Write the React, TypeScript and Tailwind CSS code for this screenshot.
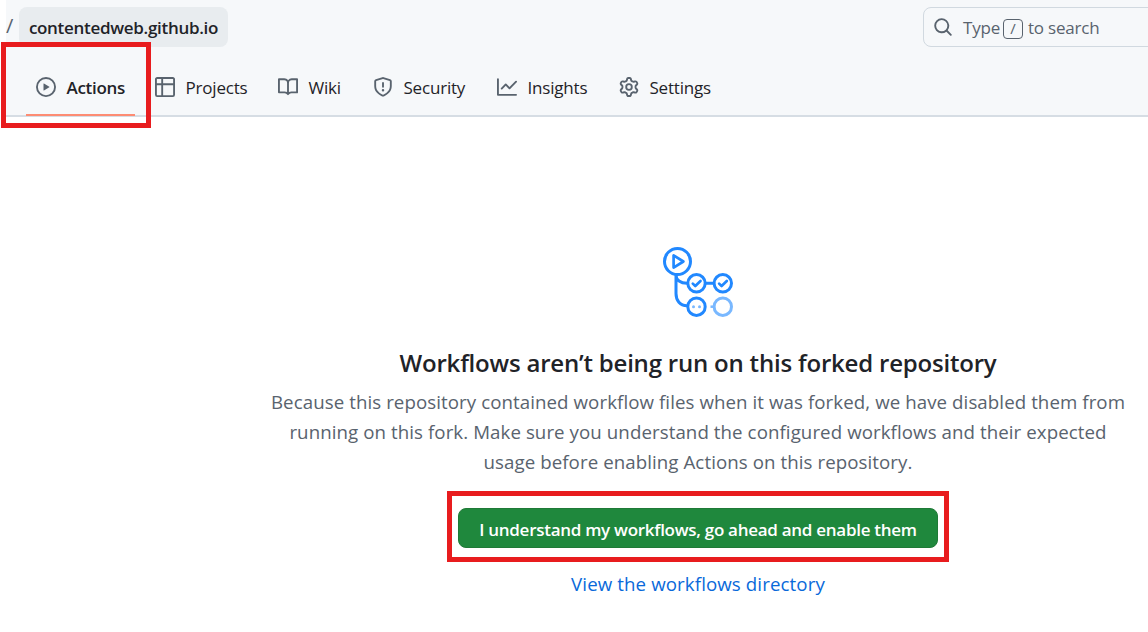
import type { ReactNode } from "react";

const paths = {
  play: "M8 0a8 8 0 1 1 0 16A8 8 0 0 1 8 0ZM1.5 8a6.5 6.5 0 1 0 13 0 6.5 6.5 0 0 0-13 0Zm4.879-2.773 4.264 2.559a.25.25 0 0 1 0 .428l-4.264 2.559A.25.25 0 0 1 6 10.559V5.442a.25.25 0 0 1 .379-.215Z",
  table: "M0 1.75C0 .784.784 0 1.75 0h12.5C15.216 0 16 .784 16 1.75v12.5A1.75 1.75 0 0 1 14.25 16H1.75A1.75 1.75 0 0 1 0 14.25ZM6.5 6.5v8h7.75a.25.25 0 0 0 .25-.25V6.5Zm8-1.5V1.75a.25.25 0 0 0-.25-.25H6.5V5Zm-13 1.5v7.75c0 .138.112.25.25.25H5v-8ZM5 5V1.5H1.75a.25.25 0 0 0-.25.25V5Z",
  book: "M0 1.75A.75.75 0 0 1 .75 1h4.253c1.227 0 2.317.59 3 1.501A3.743 3.743 0 0 1 11.006 1h4.245a.75.75 0 0 1 .75.75v10.5a.75.75 0 0 1-.75.75h-4.507a2.25 2.25 0 0 0-1.591.659l-.622.621a.75.75 0 0 1-1.06 0l-.622-.621A2.25 2.25 0 0 0 5.258 13H.75a.75.75 0 0 1-.75-.75Zm7.251 10.324.004-5.073-.002-2.253A2.25 2.25 0 0 0 5.003 2.5H1.5v9h3.757a3.75 3.75 0 0 1 1.994.574ZM8.755 4.75l-.004 7.322a3.752 3.752 0 0 1 1.992-.572H14.5v-9h-3.495a2.25 2.25 0 0 0-2.25 2.25Z",
  shield: "M7.467.133a1.748 1.748 0 0 1 1.066 0l5.25 1.68A1.75 1.75 0 0 1 15 3.48V7c0 1.566-.32 3.182-1.303 4.682-.983 1.498-2.585 2.813-5.032 3.855a1.697 1.697 0 0 1-1.33 0c-2.447-1.042-4.049-2.357-5.032-3.855C1.32 10.182 1 8.566 1 7V3.48a1.75 1.75 0 0 1 1.217-1.667Zm.61 1.429a.25.25 0 0 0-.153 0l-5.25 1.68a.25.25 0 0 0-.174.238V7c0 1.358.275 2.666 1.057 3.86.784 1.194 2.121 2.34 4.366 3.297a.196.196 0 0 0 .154 0c2.245-.956 3.582-2.104 4.366-3.298C13.225 9.666 13.5 8.36 13.5 7V3.48a.251.251 0 0 0-.174-.237l-5.25-1.68ZM8.75 4.75v3a.75.75 0 0 1-1.5 0v-3a.75.75 0 0 1 1.5 0ZM9 10.5a1 1 0 1 1-2 0 1 1 0 0 1 2 0Z",
  graph: "M1.5 1.75V13.5h13.75a.75.75 0 0 1 0 1.5H.75a.75.75 0 0 1-.75-.75V1.75a.75.75 0 0 1 1.5 0Zm14.28 2.53-5.25 5.25a.75.75 0 0 1-1.06 0L7 7.06 4.28 9.78a.751.751 0 0 1-1.042-.018.751.751 0 0 1-.018-1.042l3.25-3.25a.75.75 0 0 1 1.06 0L10 7.94l4.72-4.72a.751.751 0 0 1 1.042.018.751.751 0 0 1 .018 1.042Z",
  gear: "M8 0a8.2 8.2 0 0 1 .701.031C9.444.095 9.99.645 10.16 1.29l.288 1.107c.018.066.079.158.212.224.231.114.454.243.668.386.123.082.233.09.299.071l1.103-.303c.644-.176 1.392.021 1.82.63.27.385.506.792.704 1.218.315.675.111 1.422-.364 1.891l-.814.806c-.049.048-.098.147-.088.294.016.257.016.515 0 .772-.01.147.038.246.088.294l.814.806c.475.469.679 1.216.364 1.891a7.977 7.977 0 0 1-.704 1.217c-.428.61-1.176.807-1.82.63l-1.102-.302c-.067-.019-.177-.011-.3.071a5.909 5.909 0 0 1-.668.386c-.133.066-.194.158-.211.224l-.29 1.106c-.168.646-.715 1.196-1.458 1.26a8.006 8.006 0 0 1-1.402 0c-.743-.064-1.289-.614-1.458-1.26l-.289-1.106c-.018-.066-.079-.158-.212-.224a5.738 5.738 0 0 1-.668-.386c-.123-.082-.233-.09-.299-.071l-1.103.303c-.644.176-1.392-.021-1.82-.63a8.12 8.12 0 0 1-.704-1.218c-.315-.675-.111-1.422.363-1.891l.815-.806c.05-.048.098-.147.088-.294a6.214 6.214 0 0 1 0-.772c.01-.147-.038-.246-.088-.294l-.815-.806C.635 6.045.431 5.298.746 4.623a7.92 7.92 0 0 1 .704-1.217c.428-.61 1.176-.807 1.82-.63l1.102.302c.067.019.177.011.3-.071.214-.143.437-.272.668-.386.133-.066.194-.158.211-.224l.29-1.106C6.009.645 6.556.095 7.299.03 7.53.01 7.764 0 8 0Zm-.571 1.525c-.036.003-.108.036-.137.146l-.289 1.105c-.147.561-.549.967-.998 1.189-.173.086-.34.183-.5.29-.417.278-.97.423-1.529.27l-1.103-.303c-.109-.03-.175.016-.195.045-.22.312-.412.644-.573.99-.014.031-.021.11.059.19l.815.806c.411.406.562.957.53 1.456a4.709 4.709 0 0 0 0 .582c.032.499-.119 1.05-.53 1.456l-.815.806c-.081.08-.073.159-.059.19.162.346.353.677.573.989.02.03.085.076.195.046l1.102-.303c.56-.153 1.113-.008 1.53.27.161.107.328.204.501.29.447.222.85.629.997 1.189l.289 1.105c.029.109.101.143.137.146a6.6 6.6 0 0 0 1.142 0c.036-.003.108-.036.137-.146l.289-1.105c.147-.561.549-.967.998-1.189.173-.086.34-.183.5-.29.417-.278.97-.423 1.529-.27l1.103.303c.109.029.175-.016.195-.045.22-.313.411-.644.573-.99.014-.031.021-.11-.059-.19l-.815-.806c-.411-.406-.562-.957-.53-1.456a4.709 4.709 0 0 0 0-.582c-.032-.499.119-1.05.53-1.456l.815-.806c.081-.08.073-.159.059-.19a6.464 6.464 0 0 0-.573-.989c-.02-.03-.085-.076-.195-.046l-1.102.303c-.56.153-1.113.008-1.53-.27a4.44 4.44 0 0 0-.501-.29c-.447-.222-.85-.629-.997-1.189l-.289-1.105c-.029-.11-.101-.143-.137-.146a6.6 6.6 0 0 0-1.142 0ZM11 8a3 3 0 1 1-6 0 3 3 0 0 1 6 0ZM9.5 8a1.5 1.5 0 1 0-3.001.001A1.5 1.5 0 0 0 9.5 8Z",
  search: "M10.68 11.74a6 6 0 0 1-7.922-8.982 6 6 0 0 1 8.982 7.922l3.04 3.04a.749.749 0 0 1-.326 1.275.749.749 0 0 1-.734-.215ZM11.5 7a4.499 4.499 0 1 0-8.997 0A4.499 4.499 0 0 0 11.5 7Z",
};

function Icon({ name }: { name: keyof typeof paths }) {
  return (
    <svg viewBox="0 0 16 16" className="size-5 shrink-0 fill-[#59636e]">
      <path d={paths[name]} />
    </svg>
  );
}

function Tab({ icon, className, children }: { icon: keyof typeof paths; className: string; children: ReactNode }) {
  return (
    <a className={`flex shrink-0 items-center whitespace-nowrap ${className}`}>
      <Icon name={icon} />
      <span className="ml-[10.500px] pt-px">{children}</span>
    </a>
  );
}

function WorkflowArt() {
  return (
    <svg viewBox="0 0 72 72" className="h-[72px] w-[72px] shrink-0" fill="none" stroke="#2188ff" strokeWidth="3" strokeLinecap="round" strokeLinejoin="round">
      <circle cx="15.5" cy="15.5" r="13" />
      <path d="M11.600 9.400v12.200l9.800-6.100z" strokeWidth="2.7" />
      <path d="M14 29v18.5c0 7 4 12.3 11 12.3M14 29c0 5 4.500 8.200 11 8.200M44 37.200h8" strokeLinecap="butt" />
      <circle cx="34.500" cy="37.300" r="8.700" />
      <circle cx="60.800" cy="37.300" r="8.700" />
      <path d="M30.800 37.600l2.500 2.400 5.200-5M57.100 37.600l2.500 2.400 5.200-5" strokeWidth="2.700" />
      <circle cx="34.500" cy="60.700" r="8.700" />
      <circle cx="31.500" cy="60.700" r="1.500" fill="#79b8ff" stroke="none" />
      <circle cx="37.500" cy="60.700" r="1.500" fill="#79b8ff" stroke="none" />
      <circle cx="60.800" cy="60.700" r="8.700" stroke="#79b8ff" />
      <path d="M48.500 60.700h3" stroke="#79b8ff" strokeLinecap="butt" strokeWidth="2.500" />
    </svg>
  );
}

export default function App() {
  return (
    <div className="relative h-[632px] w-[1148px] overflow-hidden bg-white font-['Open_Sans','Noto_Sans',sans-serif] text-[#1f2328]">
      <header className="ml-[6px] flex h-[117px] flex-col border-b-2 border-[#d6dde4] bg-[#f6f8fa]">
        <div className="flex h-[55px] shrink-0 items-start pt-[7px]">
          <span className="w-[13px] shrink-0 pt-[5px] text-[20px] leading-7 text-[#59636e]">/</span>
          <span className="flex h-10 w-[209px] shrink-0 items-center justify-center whitespace-nowrap rounded-lg bg-[#e8ecef] pt-px text-[17px] font-semibold tracking-[-0.3px]">
            contentedweb.github.io
          </span>
          <div className="ml-[695px] flex h-10 w-[240px] shrink-0 items-center rounded-lg border border-[#d1d9e0] pl-[9px] text-[17px] text-[#59636e]">
            <Icon name="search" />
            <span className="ml-[10px] w-[40px] pt-px tracking-[-0.2px]">Type</span>
            <kbd className="mt-[3px] flex h-5 w-5 items-center justify-center rounded border border-[#59636e] font-['Open_Sans',sans-serif] text-[15px] leading-none">/</kbd>
            <span className="ml-[5px] whitespace-nowrap pt-px tracking-[-0.2px]">to search</span>
          </div>
        </div>
        <nav className="flex h-[61px] shrink-0 pl-5 text-[17px]">
          <div className="flex w-[109px] flex-col border-b-[2px] border-[#fd8c73] pl-[10px]">
            <div className="flex h-[64px] shrink-0 items-center">
              <Tab icon="play" className="w-[99px] font-semibold tracking-[-0.3px]">Actions</Tab>
            </div>
          </div>
          <div className="flex h-[64px] items-center pl-5 tracking-[-0.2px]">
            <Tab icon="table" className="w-[123px]">Projects</Tab>
            <Tab icon="book" className="w-[95px]">Wiki</Tab>
            <Tab icon="shield" className="w-[124px]">Security</Tab>
            <Tab icon="graph" className="w-[122px]">Insights</Tab>
            <Tab icon="gear" className="w-[110px]">Settings</Tab>
          </div>
        </nav>
      </header>
      <main className="ml-[248px] flex w-[900px] flex-col items-center pt-[129px] text-center">
        <WorkflowArt />
        <h1 className="mt-[27px] whitespace-nowrap text-[24px] font-semibold leading-9 tracking-[-0.2px]">
          Workflows aren’t being run on this forked repository
        </h1>
        <p className="mt-[6px] whitespace-nowrap text-[18.700px] leading-[30px] tracking-[0.075px] text-[#59636e]">
          Because this repository contained workflow files when it was forked, we have disabled them from
          <br />
          running on this fork. Make sure you understand the configured workflows and their expected
          <br />
          usage before enabling Actions on this repository.
        </p>
        <button className="mt-[31px] flex h-10 w-[480px] items-center justify-center whitespace-nowrap rounded-lg border border-[#1f7a37] bg-[#1f883d] pt-[3px] text-[17px] font-semibold tracking-[-0.280px] text-white">
          I understand my workflows, go ahead and enable them
        </button>
        <a className="mt-[21px] whitespace-nowrap text-[18.700px] leading-[30px] tracking-[0.1px] text-[#0969da]">View the workflows directory</a>
      </main>
      <div className="pointer-events-none absolute left-[1px] top-[42px] h-[86px] w-[150px] border-[5px] border-[#e81c1e]" />
      <div className="pointer-events-none absolute left-[447px] top-[491px] h-[71px] w-[502px] border-[5px] border-[#e81c1e]" />
    </div>
  );
}
